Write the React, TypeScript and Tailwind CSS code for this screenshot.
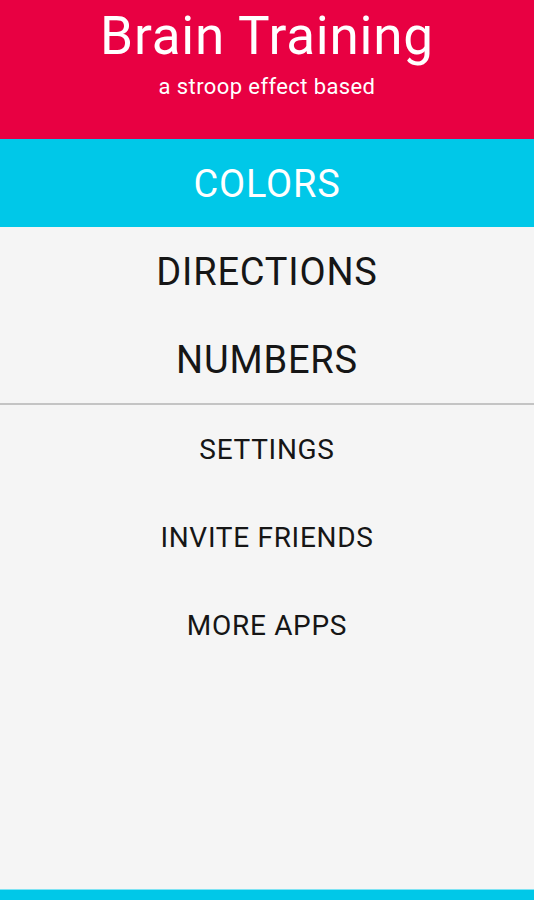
const primary = ["COLORS", "DIRECTIONS", "NUMBERS"];
const secondary = ["SETTINGS", "INVITE FRIENDS", "MORE APPS"];

export default function App() {
  return (
    <div className="flex h-[900px] w-[534px] flex-col bg-[#f5f5f5] font-['Roboto',sans-serif]">
      <header className="flex h-[139px] flex-col items-center bg-[#e80042] pt-[4px] text-white">
        <h1 className="text-[53px] leading-[64px] tracking-[0.8px]">Brain Training</h1>
        <p className="mt-[6px] text-[22px] leading-[26px] tracking-[0.4px]">a stroop effect based</p>
      </header>

      <nav className="flex flex-col">
        {primary.map((item, i) => (
          <div
            key={item}
            className={`flex h-[88px] items-center justify-center pt-[3px] text-[38px] tracking-[0.8px] ${
              i === 0 ? "bg-[#00c8e8] text-white" : "text-[#161616]"
            }`}
          >
            {item}
          </div>
        ))}
      </nav>

      <div className="h-[2px] bg-[#c4c4c4]" />

      <div className="flex flex-col">
        {secondary.map((item) => (
          <div
            key={item}
            className="flex h-[88px] items-center justify-center pt-[2px] text-[28px] tracking-[0.7px] text-[#161616]"
          >
            {item}
          </div>
        ))}
      </div>

      <div className="flex-1" />
      <div className="h-[11px] border-t border-[#7ee3f3] bg-[#00c8e8]" />
    </div>
  );
}
